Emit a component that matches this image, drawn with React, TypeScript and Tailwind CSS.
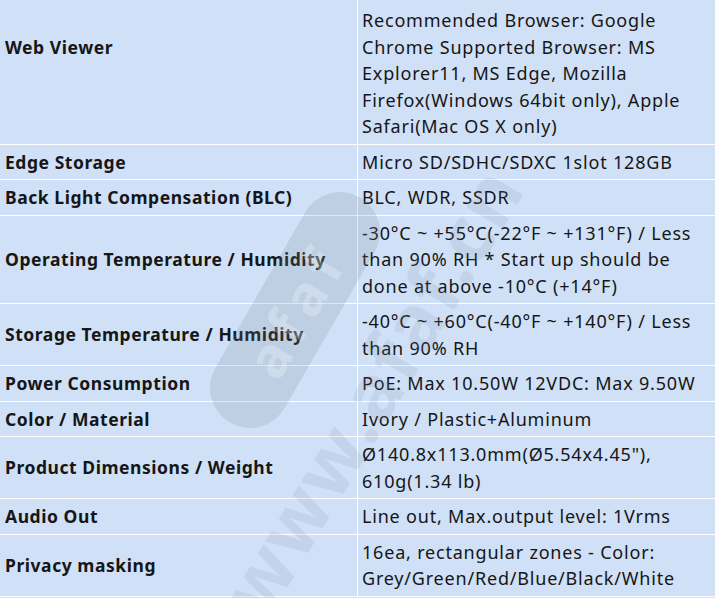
import React from "react";

const rows: { label: string; value: string[] }[] = [
  {
    label: "Web Viewer",
    value: [
      "Supported OS: Windows 7, 8.1, 10,",
      "Mac OS X 10.13, 10.14, 10.15",
      "Recommended Browser: Google",
      "Chrome Supported Browser: MS",
      "Explorer11, MS Edge, Mozilla",
      "Firefox(Windows 64bit only), Apple",
      "Safari(Mac OS X only)",
    ],
  },
  { label: "Edge Storage", value: ["Micro SD/SDHC/SDXC 1slot 128GB"] },
  { label: "Back Light Compensation (BLC)", value: ["BLC, WDR, SSDR"] },
  {
    label: "Operating Temperature / Humidity",
    value: [
      "-30°C ~ +55°C(-22°F ~ +131°F) / Less",
      "than 90% RH * Start up should be",
      "done at above -10°C (+14°F)",
    ],
  },
  {
    label: "Storage Temperature / Humidity",
    value: ["-40°C ~ +60°C(-40°F ~ +140°F) / Less", "than 90% RH"],
  },
  { label: "Power Consumption", value: ["PoE: Max 10.50W 12VDC: Max 9.50W"] },
  { label: "Color / Material", value: ["Ivory / Plastic+Aluminum"] },
  {
    label: "Product Dimensions / Weight",
    value: ["Ø140.8x113.0mm(Ø5.54x4.45\"),", "610g(1.34 lb)"],
  },
  { label: "Audio Out", value: ["Line out, Max.output level: 1Vrms"] },
  {
    label: "Privacy masking",
    value: ["16ea, rectangular zones - Color:", "Grey/Green/Red/Blue/Black/White"],
  },
];

const Watermark = () => (
  <div className="pointer-events-none absolute inset-0 overflow-hidden">
    <div className="absolute left-[165px] top-[270px] w-[260px] h-[80px] rounded-full bg-[#7d8a99]/20 -rotate-[60deg] flex items-center justify-center">
      <span className="text-[56px] font-bold text-white/25 tracking-[8px]">afaf</span>
    </div>
    <div className="absolute left-[95px] top-[305px] w-[600px] h-[90px] -rotate-[59deg] flex items-center">
      <span className="text-[78px] font-bold text-[#7d8a99]/15 tracking-[2px]">www.afaf.cn</span>
    </div>
  </div>
);

export default function App() {
  return (
    <div
      className="relative h-[598px] w-[715px] overflow-hidden bg-[#cfe0f7] text-[#161616]"
      style={{ fontFamily: '"Noto Sans", "Open Sans", sans-serif' }}
    >
      <div className="-mt-[56px] flex flex-col">
        {rows.map((r, ri) => (
          <div key={r.label} className="grid grid-cols-[358px_1fr] border-b border-white">
            <div
              className={
                ri === 0
                  ? "flex items-center border-r border-white px-[5px] pt-[10px] pb-[4px] text-[17.5px] font-bold leading-[26.5px] tracking-[0.55px]"
                  : "flex items-center border-r border-white px-[5px] py-[4px] text-[17.5px] font-bold leading-[26.5px] tracking-[0.55px]"
              }
            >
              {r.label}
            </div>
            <div className="px-[4px] py-[4px] text-[18px] leading-[26.5px] tracking-[0.8px]">
              {r.value.map((line, i) => (
                <div key={i} className={ri === 0 && i === 1 ? "mb-[6px] whitespace-nowrap" : "whitespace-nowrap"}>
                  {line}
                </div>
              ))}
            </div>
          </div>
        ))}
      </div>
      <Watermark />
    </div>
  );
}
